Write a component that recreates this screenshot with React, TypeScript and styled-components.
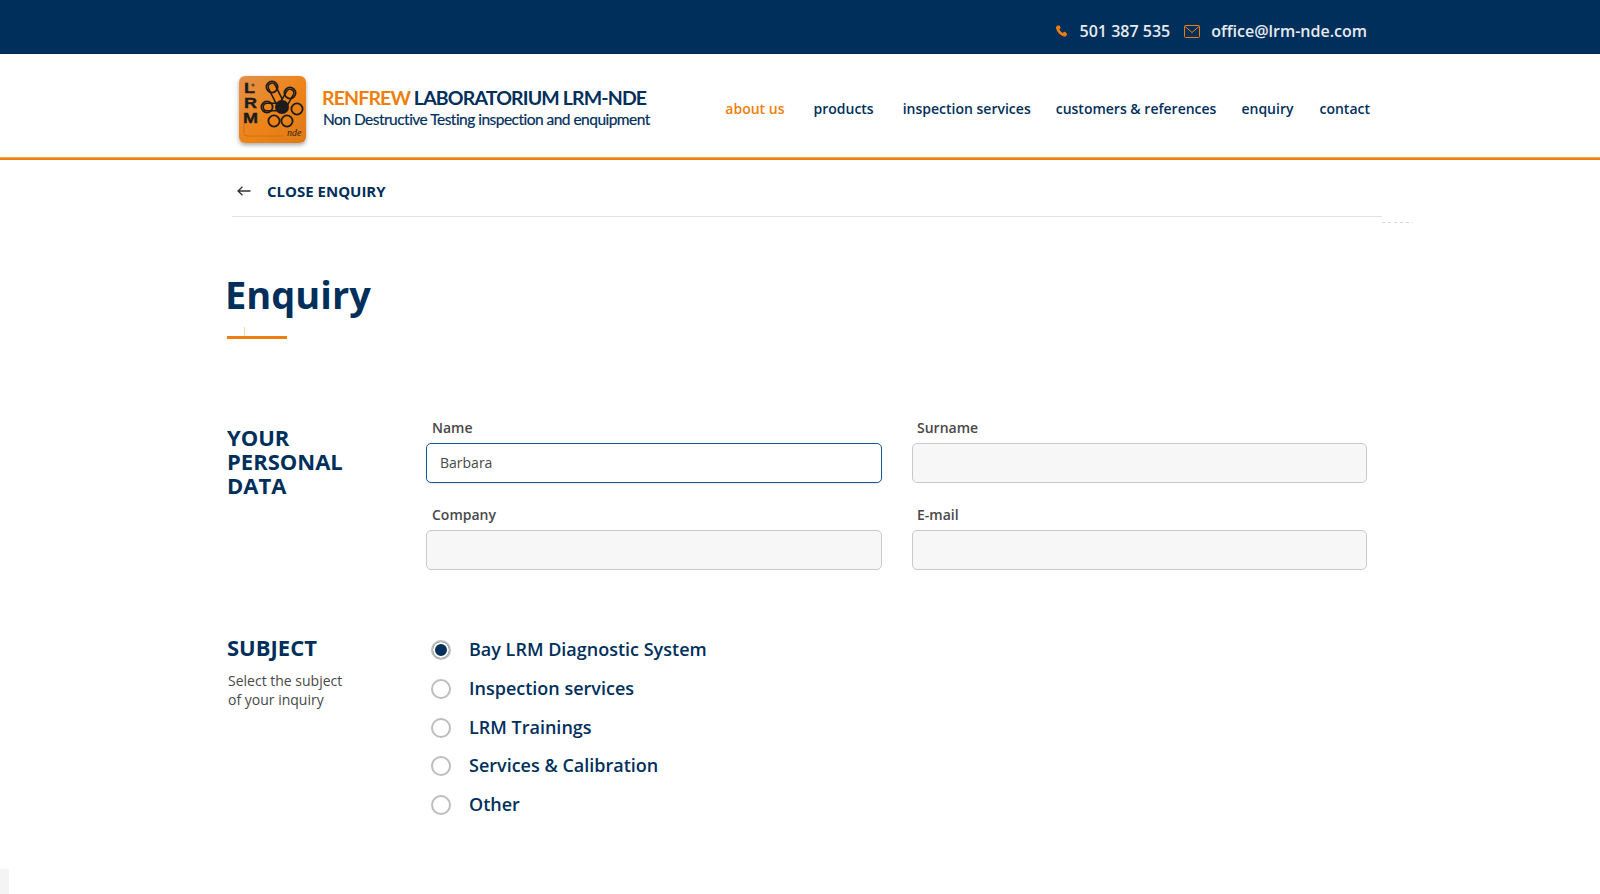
import styled, { createGlobalStyle } from "styled-components";

const NAVY = "#012f5c";
const ORANGE = "#ee7f0e";

const NAV_ITEMS = [
  { label: "about us", gap: 29, active: true },
  { label: "products", gap: 29 },
  { label: "inspection services", gap: 25 },
  { label: "customers & references", gap: 25 },
  { label: "enquiry", gap: 26 },
  { label: "contact", gap: 0 },
];

const SUBJECTS = [
  "Bay LRM Diagnostic System",
  "Inspection services",
  "LRM Trainings",
  "Services & Calibration",
  "Other",
];

// rings of the logo's wheel, tube = drawn as a pill from the hub
const LOGO_RINGS = [
  { cx: 33, cy: 11, tube: true },
  { cx: 51, cy: 17, tube: true },
  { cx: 58, cy: 33, tube: false },
  { cx: 48, cy: 45, tube: false },
  { cx: 35, cy: 45, tube: false },
  { cx: 28, cy: 31, tube: true },
];

const GlobalStyle = createGlobalStyle`
  * {
    box-sizing: border-box;
  }

  html,
  body {
    margin: 0;
    height: 894px;
    overflow: hidden;
    background: #fff;
    font-family: "Open Sans", sans-serif;
  }
`;

const Logo = () => (
  <LogoBox>
    <svg width="67" height="67" viewBox="0 0 67 67">
      <defs>
        <linearGradient id="logoFill" x1="0" y1="0" x2="1" y2="1">
          <stop offset="0" stopColor="#e2914a" />
          <stop offset="0.55" stopColor="#ee8318" />
          <stop offset="1" stopColor="#dd7a18" />
        </linearGradient>
      </defs>
      <rect width="67" height="67" rx="6" fill="url(#logoFill)" />
      <path d="M5 48v9q0 3 3 3h36" fill="none" stroke="#c96c10" strokeWidth="0.8" />
      <LogoLetter x="5" y="17" textLength="11" lengthAdjust="spacingAndGlyphs">L</LogoLetter>
      <LogoLetter x="5" y="32" textLength="13" lengthAdjust="spacingAndGlyphs">R</LogoLetter>
      <LogoLetter x="4" y="47" textLength="15" lengthAdjust="spacingAndGlyphs">M</LogoLetter>
      <circle cx="14" cy="9" r="1.6" fill="#6b4a2a" />
      {LOGO_RINGS.filter((ring) => ring.tube).map((ring) => (
        <g key={ring.cx} strokeLinecap="round">
          <line x1="43" y1="31" x2={ring.cx} y2={ring.cy} stroke="#1c1c1c" strokeWidth="9" />
          <line x1="43" y1="31" x2={ring.cx} y2={ring.cy} stroke="#ee8318" strokeWidth="6" />
        </g>
      ))}
      {LOGO_RINGS.map((ring) => (
        <circle
          key={ring.cx}
          cx={ring.cx}
          cy={ring.cy}
          r="5.6"
          fill="none"
          stroke="#1c1c1c"
          strokeWidth="1.8"
        />
      ))}
      <circle cx="43" cy="31" r="7" fill="#1c1c1c" />
      <LogoMark x="48" y="60">nde</LogoMark>
    </svg>
  </LogoBox>
);

const App = () => {
  return (
    <>
      <GlobalStyle />
      <TopBar>
        <TopBarInner>
          <svg width="13" height="14" viewBox="0 0 24 24">
            <path
              d="M6.6 1.5 3 3.2C1.8 4 1.6 5.4 2 7c1.8 7.4 7.6 13.4 14.8 15.2 1.6.4 3 0 3.8-1.2l1.7-3.2c.3-.6.1-1.2-.4-1.6l-4-2.6c-.5-.3-1.2-.2-1.6.2l-1.6 1.9c-3-1.4-5.4-4-6.6-7l2-1.6c.5-.4.6-1 .3-1.6L7.9 1.9c-.3-.5-.9-.7-1.3-.4Z"
              fill={ORANGE}
            />
          </svg>
          <ContactText>501 387 535</ContactText>
          <MailIcon width="16" height="13" viewBox="0 0 16 13">
            <rect x="0.5" y="0.5" width="15" height="12" rx="1" fill="none" stroke={ORANGE} />
            <path d="M1 1.5 8 7.5 15 1.5" fill="none" stroke={ORANGE} />
          </MailIcon>
          <ContactText>office@lrm-nde.com</ContactText>
        </TopBarInner>
      </TopBar>

      <Header>
        <Logo />
        <Brand>
          <BrandName>
            <BrandAccent>RENFREW</BrandAccent> LABORATORIUM LRM-NDE
          </BrandName>
          <BrandTagline>Non Destructive Testing inspection and enquipment</BrandTagline>
        </Brand>
        <Nav>
          {NAV_ITEMS.map((item) => (
            <NavItem key={item.label} $active={item.active} $gap={item.gap}>
              {item.label}
            </NavItem>
          ))}
        </Nav>
      </Header>

      <CloseRow>
        <BackArrow width="14" height="10" viewBox="0 0 14 10">
          <path d="M13.5 5H1M5.5 .8 1 5l4.5 4.2" fill="none" stroke="#333" strokeWidth="1.3" />
        </BackArrow>
        <CloseText>CLOSE ENQUIRY</CloseText>
        <DottedTail />
      </CloseRow>

      <Main>
        <PageTitle>Enquiry</PageTitle>
        <TitleRule />

        <PersonalSection>
          <SectionTitle>
            YOUR
            <br />
            PERSONAL
            <br />
            DATA
          </SectionTitle>
          <FieldGrid>
            <Field>
              <FieldLabel>Name</FieldLabel>
              <FieldInput $focused>Barbara</FieldInput>
            </Field>
            <Field>
              <FieldLabel>Surname</FieldLabel>
              <FieldInput />
            </Field>
            <Field>
              <FieldLabel>Company</FieldLabel>
              <FieldInput />
            </Field>
            <Field>
              <FieldLabel>E-mail</FieldLabel>
              <FieldInput />
            </Field>
          </FieldGrid>
        </PersonalSection>

        <SubjectSection>
          <div>
            <SectionTitle>SUBJECT</SectionTitle>
            <SectionHint>
              Select the subject
              <br />
              of your inquiry
            </SectionHint>
          </div>
          <RadioList>
            {SUBJECTS.map((subject, index) => (
              <RadioRow key={subject}>
                <RadioDot $checked={index === 0} />
                <RadioLabel>{subject}</RadioLabel>
              </RadioRow>
            ))}
          </RadioList>
        </SubjectSection>
      </Main>
      <CornerTab />
    </>
  );
};

const TopBar = styled.div`
  height: 54px;
  padding: 8px 233px 0 0;
  background: ${NAVY};
  display: flex;
  align-items: center;
  justify-content: flex-end;
`;

const TopBarInner = styled.div`
  display: flex;
  align-items: center;
`;

const ContactText = styled.span`
  margin-left: 12px;
  font-size: 16px;
  font-weight: 600;
  color: #e6ebf0;
`;

const MailIcon = styled.svg`
  margin: 0 -1px 0 14px;
`;

const Header = styled.header`
  height: 106px;
  display: flex;
  align-items: center;
  padding: 0 230px 1px 239px;
  border-bottom: 2px solid ${ORANGE};
  box-shadow: inset 0 -1px 0 #f4a65a;
`;

const LogoBox = styled.div`
  width: 67px;
  height: 67px;
  flex: none;
  margin-top: 8px;
  border-radius: 6px;
  box-shadow: 0 2px 4px rgba(0, 0, 0, 0.35);
`;

const LogoLetter = styled.text`
  font-family: "Liberation Sans", sans-serif;
  font-size: 15.5px;
  font-weight: 700;
  fill: #1c1c1c;
  stroke: #1c1c1c;
  stroke-width: 0.4px;
`;

const LogoMark = styled.text`
  font-family: "Liberation Serif", serif;
  font-size: 10px;
  font-style: italic;
  fill: #33230f;
`;

const Brand = styled.div`
  margin-left: 16px;
  margin-top: 4px;
  font-family: Lato, sans-serif;
  color: ${NAVY};
`;

const BrandName = styled.div`
  font-size: 19.5px;
  line-height: 24px;
  font-weight: 700;
  letter-spacing: -0.85px;
  white-space: nowrap;
`;

const BrandAccent = styled.span`
  color: ${ORANGE};
`;

const BrandTagline = styled.div`
  margin-left: 1px;
  font-size: 15.5px;
  line-height: 19px;
  letter-spacing: -0.52px;
  -webkit-text-stroke: 0.2px ${NAVY};
  white-space: nowrap;
`;

const Nav = styled.nav`
  margin-left: auto;
  margin-top: 5px;
  display: flex;
`;

const NavItem = styled.a<{ $active?: boolean; $gap: number }>`
  margin-right: ${(p) => p.$gap}px;
  font-size: 14px;
  font-weight: 600;
  white-space: nowrap;
  color: ${(p) => (p.$active ? ORANGE : NAVY)};
`;

const CloseRow = styled.div`
  position: relative;
  height: 57px;
  margin: 0 218px 0 232px;
  padding-top: 6px;
  display: flex;
  align-items: center;
  border-bottom: 1px solid #e2e2e2;
`;

const BackArrow = styled.svg`
  flex: none;
  margin-left: 5px;
`;

const CloseText = styled.span`
  margin-left: 16px;
  font-size: 15px;
  font-weight: 700;
  color: ${NAVY};
`;

const DottedTail = styled.div`
  position: absolute;
  left: 100%;
  top: 62px;
  width: 31px;
  height: 1px;
  background: repeating-linear-gradient(to right, #d8d8d8 0 3px, transparent 3px 6px);
`;

const Main = styled.main`
  padding: 0 233px 0 227px;
`;

const PageTitle = styled.h1`
  margin: 51px 0 0 -2px;
  font-size: 38px;
  line-height: 53px;
  font-weight: 700;
  color: ${NAVY};
`;

const TitleRule = styled.div`
  position: relative;
  width: 60px;
  height: 3px;
  margin-top: 15px;
  background: ${ORANGE};

  &::before {
    content: "";
    position: absolute;
    left: 17px;
    bottom: 3px;
    width: 1px;
    height: 9px;
    background: #fbd9a8;
  }
`;

const PersonalSection = styled.section`
  display: grid;
  grid-template-columns: 199px 1fr;
  margin-top: 86px;
`;

const SectionTitle = styled.h2`
  margin: 0;
  font-size: 22px;
  line-height: 24px;
  font-weight: 700;
  color: ${NAVY};
`;

const FieldGrid = styled.div`
  display: grid;
  grid-template-columns: 456px 455px;
  column-gap: 30px;
  row-gap: 22px;
  margin-top: -7px;
`;

const Field = styled.div`
  display: flex;
  flex-direction: column;

  &:nth-child(even) label {
    margin-left: 5px;
  }
`;

const FieldLabel = styled.label`
  margin-left: 6px;
  font-size: 14px;
  line-height: 19px;
  height: 25px;
  font-weight: 600;
  color: #484848;
`;

const FieldInput = styled.div<{ $focused?: boolean }>`
  height: 40px;
  padding: 0 13px 2px;
  display: flex;
  align-items: center;
  font-size: 14px;
  color: #484848;
  border-radius: 5px;
  background: ${(p) => (p.$focused ? "#fff" : "#f7f7f7")};
  border: 1px solid ${(p) => (p.$focused ? "#14599c" : "#c8c8c8")};
  box-shadow: ${(p) => (p.$focused ? "0 1px 2px rgba(0, 0, 0, 0.1)" : "none")};
`;

const SubjectSection = styled.section`
  display: grid;
  grid-template-columns: 204px 1fr;
  margin-top: 65px;
`;

const SectionHint = styled.p`
  margin: 12px 0 0 1px;
  font-size: 14px;
  line-height: 19px;
  color: #484848;
`;

const RadioList = styled.div`
  display: flex;
  flex-direction: column;
  gap: 18.8px;
  margin-top: 5px;
`;

const RadioRow = styled.label`
  display: flex;
  align-items: center;
  height: 20px;
`;

const RadioDot = styled.span<{ $checked?: boolean }>`
  width: 20px;
  height: 20px;
  flex: none;
  border-radius: 50%;
  border: 2px solid #bdbdbd;
  background: ${(p) => (p.$checked ? NAVY : "#fff")};
  box-shadow: ${(p) => (p.$checked ? "inset 0 0 0 2px #fff" : "none")};
`;

const RadioLabel = styled.span`
  margin: 0 0 2px 18px;
  font-size: 18px;
  font-weight: 600;
  color: ${NAVY};
`;

const CornerTab = styled.div`
  position: fixed;
  left: 0;
  bottom: 0;
  width: 9px;
  height: 25px;
  background: #f4f4f4;
`;

export default App;
